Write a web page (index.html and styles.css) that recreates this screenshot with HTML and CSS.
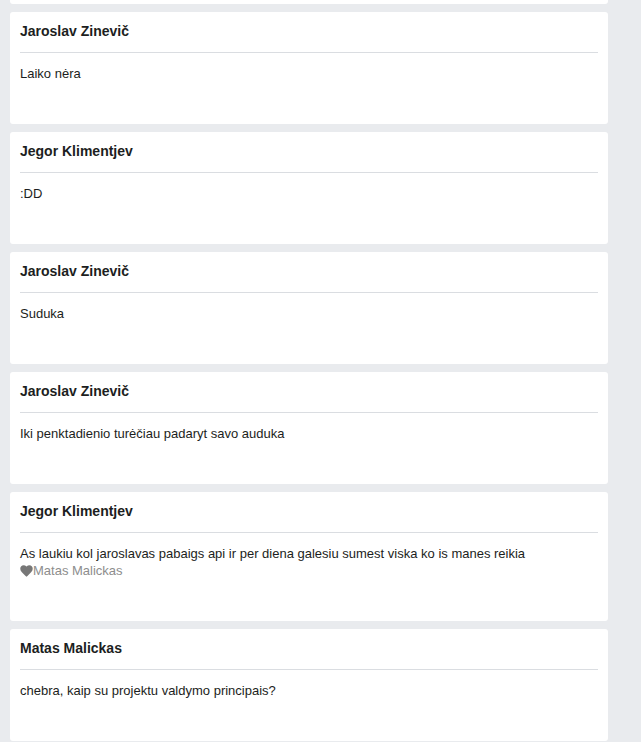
FILE: index.html
```html
<!DOCTYPE html>
<html lang="lt">
<head>
<meta charset="utf-8">
<link rel="stylesheet" href="styles.css">
</head>
<body>
<div class="feed">
  <div class="card card-tail"></div>
  <div class="card">
    <div class="card-head">Jaroslav Zinevič</div>
    <div class="card-body">Laiko nėra</div>
  </div>
  <div class="card">
    <div class="card-head">Jegor Klimentjev</div>
    <div class="card-body">:DD</div>
  </div>
  <div class="card">
    <div class="card-head">Jaroslav Zinevič</div>
    <div class="card-body">Suduka</div>
  </div>
  <div class="card">
    <div class="card-head">Jaroslav Zinevič</div>
    <div class="card-body">Iki penktadienio turėčiau padaryt savo auduka</div>
  </div>
  <div class="card">
    <div class="card-head">Jegor Klimentjev</div>
    <div class="card-body">As laukiu kol jaroslavas pabaigs api ir per diena galesiu sumest viska ko is manes reikia
      <div class="likes"><svg class="heart" viewBox="0 0 24 22" width="13" height="12"><path d="M12 21.5 10.3 20C4.2 14.5 0.5 11.2 0.5 6.9 0.5 3.4 3.2 0.5 6.6 0.5c1.9 0 3.8 0.9 5.4 2.4C13.6 1.4 15.5 0.5 17.4 0.5c3.4 0 6.1 2.9 6.1 6.4 0 4.3-3.7 7.6-9.8 13.1z" fill="#777"/></svg>Matas Malickas</div>
    </div>
  </div>
  <div class="card">
    <div class="card-head">Matas Malickas</div>
    <div class="card-body">chebra, kaip su projektu valdymo principais?</div>
  </div>
</div>
</body>
</html>
```
FILE: styles.css
```css
html, body {
  margin: 0;
  padding: 0;
  background: #e9ebee;
}
body {
  font-family: "Liberation Sans", Arial, sans-serif;
  color: #1c1e21;
}
.feed {
  display: flex;
  flex-direction: column;
  gap: 8px;
  width: 598px;
  margin-left: 10px;
}
.card {
  background: #fff;
  border-radius: 3px;
  padding: 0 10px;
}
.card-tail {
  height: 4px;
  border-radius: 0 0 3px 3px;
}
.card-head {
  font-size: 14px;
  font-weight: bold;
  line-height: 18px;
  padding: 10px 0 12px;
  border-bottom: 1px solid #dadde1;
}
.card-body {
  font-size: 13px;
  line-height: 17px;
  padding: 12px 0 42px;
}
.likes {
  color: #8d8d8d;
  display: flex;
  align-items: center;
}
.heart {
  display: block;
  margin-top: 1px;
}
```
